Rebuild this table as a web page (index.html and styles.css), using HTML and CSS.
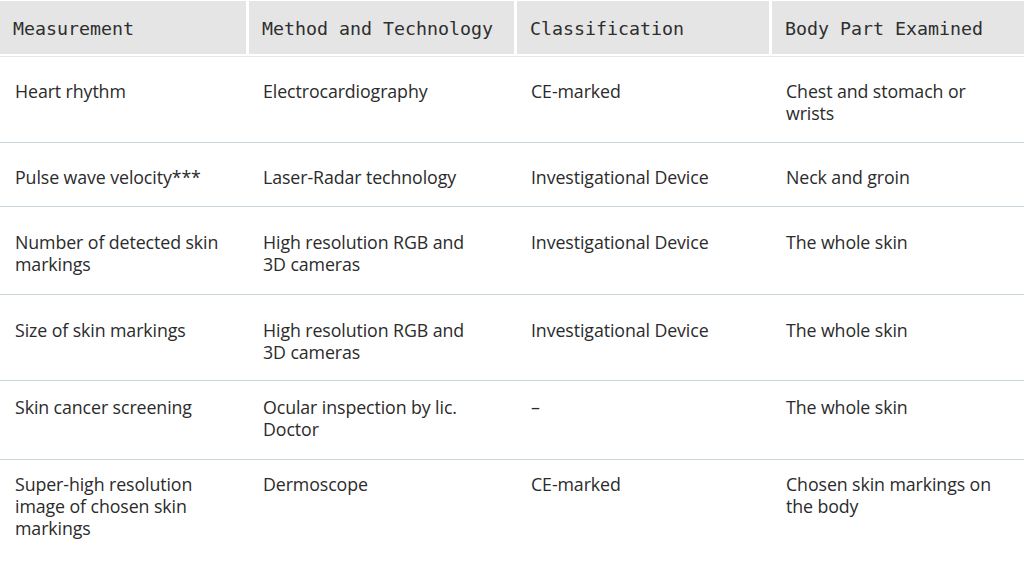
FILE: index.html
```html
<!DOCTYPE html>
<html lang="en">
<head>
<meta charset="utf-8">
<title>Measurements</title>
<link rel="stylesheet" href="styles.css">
</head>
<body>
<div class="table">
  <div class="row head">
    <div class="th">Measurement</div>
    <div class="th">Method and Technology</div>
    <div class="th">Classification</div>
    <div class="th">Body Part Examined</div>
  </div>
  <div class="row r1">
    <div class="td">Heart rhythm</div>
    <div class="td">Electrocardiography</div>
    <div class="td">CE-marked</div>
    <div class="td">Chest and stomach or wrists</div>
  </div>
  <div class="row r2">
    <div class="td">Pulse wave velocity***</div>
    <div class="td">Laser-Radar technology</div>
    <div class="td">Investigational Device</div>
    <div class="td">Neck and groin</div>
  </div>
  <div class="row r3">
    <div class="td">Number of detected skin markings</div>
    <div class="td">High resolution RGB and 3D cameras</div>
    <div class="td">Investigational Device</div>
    <div class="td">The whole skin</div>
  </div>
  <div class="row r4">
    <div class="td">Size of skin markings</div>
    <div class="td">High resolution RGB and 3D cameras</div>
    <div class="td">Investigational Device</div>
    <div class="td">The whole skin</div>
  </div>
  <div class="row r5">
    <div class="td">Skin cancer screening</div>
    <div class="td">Ocular inspection by lic. Doctor</div>
    <div class="td">–</div>
    <div class="td">The whole skin</div>
  </div>
  <div class="row r6">
    <div class="td">Super-high resolution image of chosen skin markings</div>
    <div class="td">Dermoscope</div>
    <div class="td">CE-marked</div>
    <div class="td">Chosen skin markings on the body</div>
  </div>
</div>
</body>
</html>
```

FILE: styles.css
```css
html, body {
  margin: 0;
  padding: 0;
  background: #ffffff;
}

.table {
  width: 1024px;
  padding-top: 1px;
}

.row {
  display: grid;
  grid-template-columns: 246px 265px 252px 252px;
  column-gap: 3px;
  border-bottom: 1.5px solid #c9d5dc;
  box-sizing: border-box;
}

.head {
  height: 56px;
  padding-bottom: 2px;
  border-bottom: 1px solid #dfe8ee;
}

.th {
  background: #e5e5e5;
  font-family: "DejaVu Sans Mono", "Liberation Mono", monospace;
  font-size: 18.3px;
  color: #2e2e2e;
  padding: 2px 0 0 13px;
  display: flex;
  align-items: center;
}

.td {
  font-family: "Open Sans", "Noto Sans", sans-serif;
  font-size: 17.8px;
  line-height: 22px;
  color: #2b2b2b;
  padding-left: 15px;
  padding-right: 12px;
  letter-spacing: -0.1px;
}

.td:nth-child(2) { padding-left: 14px; padding-right: 28px; }
.td:nth-child(3) { padding-left: 14px; }
.td:nth-child(4) { padding-left: 14px; }

.r1 { height: 86px; padding-top: 23px; }
.r2 { height: 64px; padding-top: 23px; }
.r3 { height: 88px; padding-top: 24px; }
.r4 { height: 86px; padding-top: 24px; }
.r5 { height: 79px; padding-top: 15px; }
.r6 { height: 90px; padding-top: 13px; border-bottom: none; }
```
